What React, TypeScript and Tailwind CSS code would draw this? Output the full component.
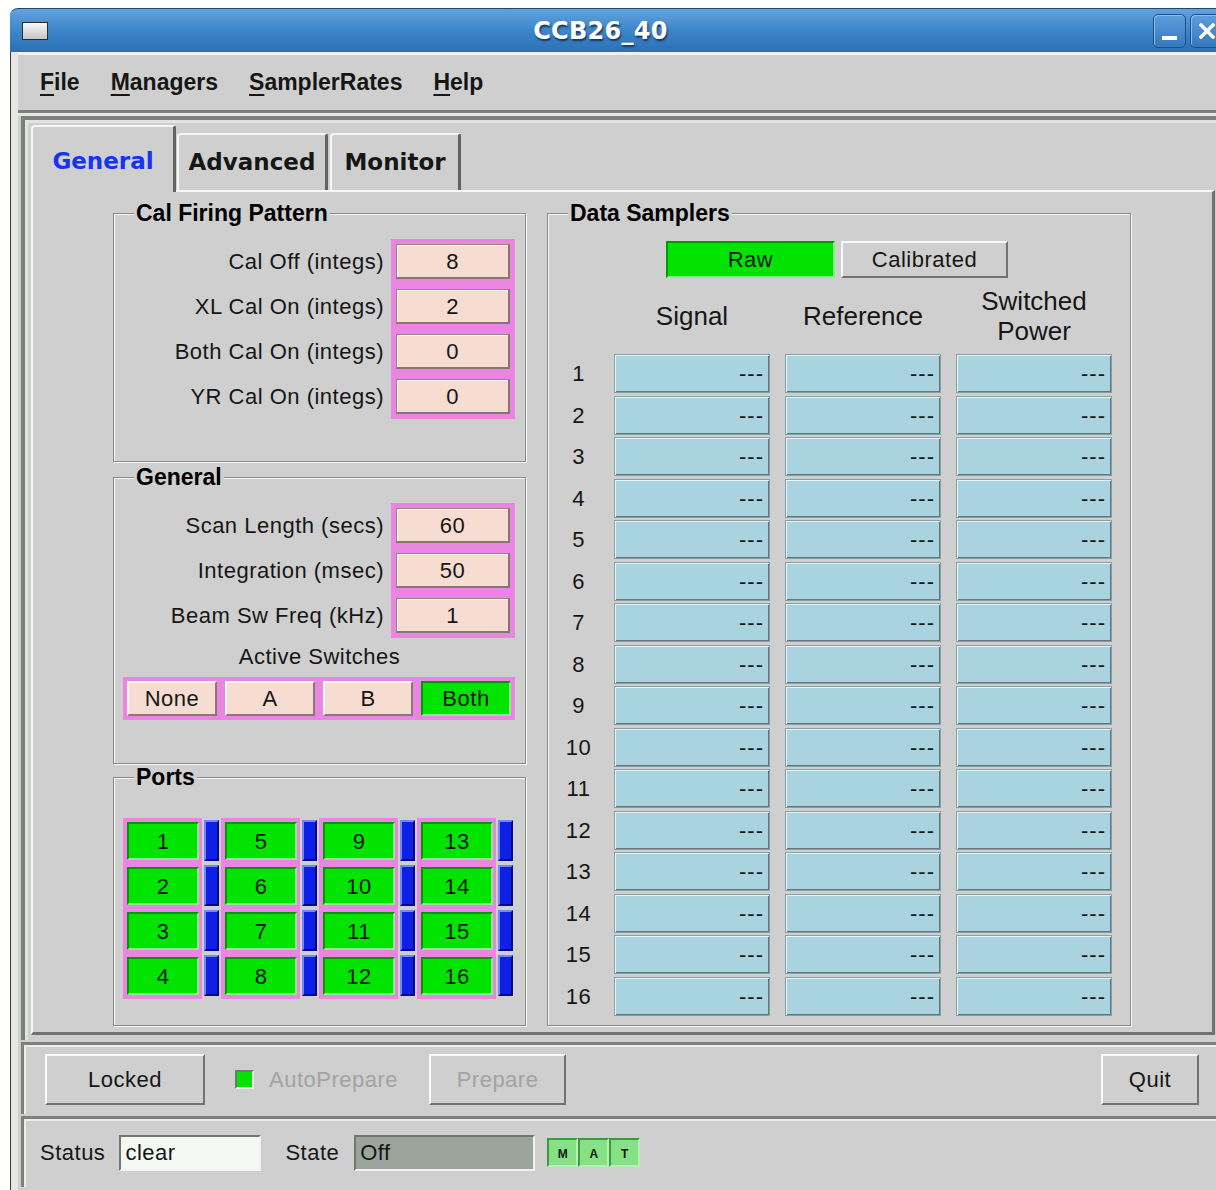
import React from "react";

const raisedGrey =
  "border-2 border-t-[#fafafa] border-l-[#fafafa] border-r-[#6f746f] border-b-[#6f746f] bg-[#cfcfcf]";
const raisedPeach =
  "border-2 border-t-[#fff8f4] border-l-[#fff8f4] border-r-[#8c7872] border-b-[#8c7872] bg-[#f7dcd2]";
const sunkenGreen =
  "border-2 border-t-[#009800] border-l-[#009800] border-r-[#86f286] border-b-[#86f286] bg-[#00e400]";
const sunkenField =
  "border-2 border-t-[#727772] border-l-[#727772] border-r-[#f2f2f2] border-b-[#f2f2f2]";

const calRows = [
  ["Cal Off (integs)", "8"],
  ["XL Cal On (integs)", "2"],
  ["Both Cal On (integs)", "0"],
  ["YR Cal On (integs)", "0"],
];

const generalRows = [
  ["Scan Length (secs)", "60"],
  ["Integration (msec)", "50"],
  ["Beam Sw Freq (kHz)", "1"],
];

function TitleBar() {
  return (
    <div className="flex h-[44px] items-center rounded-tl-[8px] border-t border-[#23466e] bg-linear-to-b from-[#62a2de] via-[#3d86ca] to-[#2d70b4] pl-[12px] pr-[19px]">
      <div className="h-[18px] w-[26px] border border-[#2b2b2b] bg-linear-to-b from-[#fbfbfb] to-[#c4c4c4]" />
      <div className="flex-1 text-center font-['DejaVu_Sans',sans-serif] text-[24px] font-bold tracking-[0.3px] text-white [text-shadow:1px_2px_2px_#16355a]">
        CCB26_40
      </div>
      <div className="flex gap-[4px]">
        <div className="flex h-[34px] w-[33px] items-end justify-center rounded-[5px] border border-[#1f4e86] bg-linear-to-b from-[#5d9ddb] to-[#3479bd] pb-[7px] shadow-[inset_1px_1px_0_#8dbdea]">
          <div className="h-[4px] w-[15px] bg-white" />
        </div>
        <div className="flex h-[34px] w-[33px] items-center justify-center rounded-[5px] border border-[#1f4e86] bg-linear-to-b from-[#5d9ddb] to-[#3479bd] shadow-[inset_1px_1px_0_#8dbdea]">
          <svg width="16" height="16" viewBox="0 0 16 16">
            <path d="M2 2 L14 14 M14 2 L2 14" stroke="white" strokeWidth="3.5" strokeLinecap="square" />
          </svg>
        </div>
      </div>
    </div>
  );
}

function Mnemonic({ first, rest }: { first: string; rest: string }) {
  return (
    <span>
      <span className="underline decoration-[2px] underline-offset-[4px]">{first}</span>
      {rest}
    </span>
  );
}

function MenuBar() {
  return (
    <div className="flex h-[61px] items-center gap-[31px] border-t-[3px] border-b-[3px] border-t-[#efefef] border-b-[#7c817c] pl-[22px] text-[23px] font-bold tracking-normal shadow-[0_3px_0_#e6e6e6]">
      <Mnemonic first="F" rest="ile" />
      <Mnemonic first="M" rest="anagers" />
      <Mnemonic first="S" rest="amplerRates" />
      <Mnemonic first="H" rest="elp" />
    </div>
  );
}

function Group({
  title,
  className,
  children,
}: {
  title: string;
  className?: string;
  children?: React.ReactNode;
}) {
  return (
    <div
      className={`relative border border-[#878c87] shadow-[inset_1px_1px_0_#f8f8f8,1px_1px_0_#f8f8f8] ${className ?? ""}`}
    >
      <span className="absolute -top-[13px] left-[20px] bg-[#cfcfcf] px-[2px] text-[23px] font-bold leading-[24px] tracking-normal text-black">
        {title}
      </span>
      {children}
    </div>
  );
}

function ValueForm({ rows }: { rows: string[][] }) {
  return (
    <div className="flex justify-end pr-[10px] pt-[25px]">
      <div className="mr-[7px] flex flex-col gap-[10px] pt-[5px]">
        {rows.map(([label]) => (
          <div key={label} className="flex h-[35px] items-center justify-end">
            {label}
          </div>
        ))}
      </div>
      <div className="flex flex-col gap-[10px] bg-[#ea86e2] p-[5px]">
        {rows.map(([label, value]) => (
          <div
            key={label}
            className="flex h-[35px] w-[114px] items-center justify-center border border-[#958680] border-b-2 border-r-2 border-b-[#867670] border-r-[#867670] bg-[#f7dcd2] shadow-[inset_1px_1px_0_#fff6f2]"
          >
            {value}
          </div>
        ))}
      </div>
    </div>
  );
}

function SwitchButtons() {
  const opts = ["None", "A", "B", "Both"];
  return (
    <div className="ml-[9px] mt-[6px] flex w-[392px] gap-[8px] bg-[#ea86e2] p-[4px]">
      {opts.map((o) => (
        <div
          key={o}
          className={`flex h-[35px] flex-1 items-center justify-center ${o === "Both" ? sunkenGreen : raisedPeach}`}
        >
          {o}
        </div>
      ))}
    </div>
  );
}

function Ports() {
  return (
    <div className="ml-[9px] mt-[40px] flex gap-[2px]">
      {[0, 1, 2, 3].map((c) => (
        <div key={c} className="flex gap-[2px]">
          <div className="flex w-[79px] flex-col gap-[7px] bg-[#ea86e2] py-[4px] pl-[4px] pr-[3px]">
            {[1, 2, 3, 4].map((r) => (
              <div key={r} className={`flex h-[38px] items-center justify-center ${sunkenGreen}`}>
                {c * 4 + r}
              </div>
            ))}
          </div>
          <div className="flex flex-col gap-[4px] pt-[2px]">
            {[1, 2, 3, 4].map((r) => (
              <div
                key={r}
                className="h-[41px] w-[15px] border-2 border-t-[#7488f4] border-l-[#7488f4] border-r-[#06088c] border-b-[#06088c] bg-[#0e20e6]"
              />
            ))}
          </div>
        </div>
      ))}
    </div>
  );
}

function DataSamplers() {
  const rows = Array.from({ length: 16 }, (_, i) => i + 1);
  return (
    <Group title="Data Samplers" className="h-[813px] w-[584px]">
      <div className="mt-[27px] flex gap-[6px] pl-[118px]">
        <div className={`flex h-[37px] w-[169px] items-center justify-center ${sunkenGreen}`}>Raw</div>
        <div className={`flex h-[37px] w-[167px] items-center justify-center ${raisedGrey}`}>Calibrated</div>
      </div>
      <div className="mt-[8px] grid h-[60px] grid-cols-[41px_156px_156px_156px] gap-x-[15px] pl-[10px] text-[26px] leading-[30px] tracking-normal">
        <div />
        <div className="flex items-center justify-center">Signal</div>
        <div className="flex items-center justify-center">Reference</div>
        <div className="flex flex-col items-center justify-center">
          <span>Switched</span>
          <span>Power</span>
        </div>
      </div>
      <div className="mt-[8px] grid auto-rows-[39px] grid-cols-[41px_156px_156px_156px] gap-x-[15px] gap-y-[2.5px] pl-[10px]">
        {rows.map((r) => (
          <React.Fragment key={r}>
            <div className="flex items-center justify-center">{r}</div>
            {[0, 1, 2].map((c) => (
              <div
                key={c}
                className="flex items-center justify-end border border-[#87a0a6] bg-[#a9d3de] pr-[5px] tracking-[1px] shadow-[inset_1px_1px_0_#e4f4f7,inset_-1px_-1px_0_#5f777d]"
              >
                ---
              </div>
            ))}
          </React.Fragment>
        ))}
      </div>
    </Group>
  );
}

function Notebook() {
  const tabFont = "font-['DejaVu_Sans',sans-serif] text-[23px] font-bold tracking-normal";
  const tabEdge =
    "rounded-tl-[4px] rounded-tr-[3px] border-t-2 border-l-2 border-r-[3px] border-t-[#f6f6f6] border-l-[#f6f6f6] border-r-[#5f645f] bg-[#cfcfcf]";
  return (
    <div className="ml-[3px] mt-[3px] w-[1195px] border-l-4 border-t-4 border-[#7c817c] pb-[5px] pl-[6px] pt-[5px] shadow-[inset_3px_3px_0_#e3e3e3]">
      <div className={`flex items-end ${tabFont}`}>
        <div className={`relative z-10 -mb-[2px] flex h-[67px] w-[145px] items-center justify-center pt-[4px] text-[#1534f2] ${tabEdge}`}>
          General
        </div>
        <div className={`ml-[1px] flex h-[57px] w-[151px] items-center justify-center ${tabEdge}`}>Advanced</div>
        <div className={`ml-[2px] flex h-[57px] w-[131px] items-center justify-center ${tabEdge}`}>Monitor</div>
      </div>
      <div className="flex h-[845px] w-[1184px] gap-[21px] border-b-[3px] border-l-2 border-r-[3px] border-t-2 border-b-[#6f746f] border-l-[#f6f6f6] border-r-[#6f746f] border-t-[#f6f6f6] pl-[80px] pt-[21px]">
        <div className="flex w-[413px] flex-col">
          <Group title="Cal Firing Pattern" className="h-[249px]">
            <ValueForm rows={calRows} />
          </Group>
          <Group title="General" className="mt-[15px] h-[287px]">
            <ValueForm rows={generalRows} />
            <div className="mt-[5px] h-[28px] text-center leading-[28px]">Active Switches</div>
            <SwitchButtons />
          </Group>
          <Group title="Ports" className="mt-[13px] h-[249px]">
            <Ports />
          </Group>
        </div>
        <DataSamplers />
      </div>
    </div>
  );
}

function ButtonBar() {
  return (
    <div className="ml-[3px] mt-[2px] flex h-[72px] w-[1195px] items-center border-l-[3px] border-t-[3px] border-[#7c817c] pl-[21px] pr-[17px] shadow-[inset_2px_2px_0_#ececec]">
      <div className={`flex h-[51px] w-[160px] items-center justify-center ${raisedGrey}`}>Locked</div>
      <div className={`ml-[30px] h-[19px] w-[19px] bg-[#00e400] ${sunkenField}`} />
      <span className="ml-[15px] text-[#a3a3a3]">AutoPrepare</span>
      <div className={`ml-[31px] flex h-[51px] w-[137px] items-center justify-center text-[#a3a3a3] ${raisedGrey}`}>
        Prepare
      </div>
      <div className={`ml-auto flex h-[51px] w-[98px] items-center justify-center ${raisedGrey}`}>Quit</div>
    </div>
  );
}

function StatusBar() {
  return (
    <div className="ml-[3px] mt-[2px] flex h-[71px] w-[1195px] items-center border-l-[3px] border-t-[3px] border-[#7c817c] pb-[1px] pl-[16px] shadow-[inset_2px_2px_0_#ececec]">
      <span>Status</span>
      <div className={`ml-[14px] flex h-[36px] w-[142px] items-center bg-[#f4f8f2] pl-[4px] ${sunkenField}`}>clear</div>
      <span className="ml-[24px]">State</span>
      <div className={`ml-[15px] flex h-[36px] w-[181px] items-center bg-[#9ba59b] pl-[4px] ${sunkenField}`}>Off</div>
      <div className="ml-[12px] flex">
        {["M", "A", "T"].map((l) => (
          <div
            key={l}
            className="flex h-[29px] w-[31px] items-end justify-center border-2 border-t-[#3f9a3f] border-l-[#3f9a3f] border-r-[#b4f2b4] border-b-[#b4f2b4] bg-[#84e284] pb-[2px] text-[12px] font-bold tracking-normal"
          >
            {l}
          </div>
        ))}
      </div>
    </div>
  );
}

export default function App() {
  return (
    <div className="h-[1190px] w-[1216px] overflow-hidden bg-white pl-[10px] pt-[8px] font-['Liberation_Sans',Arial,Helvetica,sans-serif] text-[22px] tracking-[0.5px] text-[#161616]">
      <div className="w-[1232px]">
        <TitleBar />
        <div className="h-[1138px] border-l border-[#3b3b3b] bg-[#cfcfcf] pl-[7px] shadow-[inset_7px_0_0_#e6e6e3]">
          <MenuBar />
          <Notebook />
          <ButtonBar />
          <StatusBar />
        </div>
      </div>
    </div>
  );
}
